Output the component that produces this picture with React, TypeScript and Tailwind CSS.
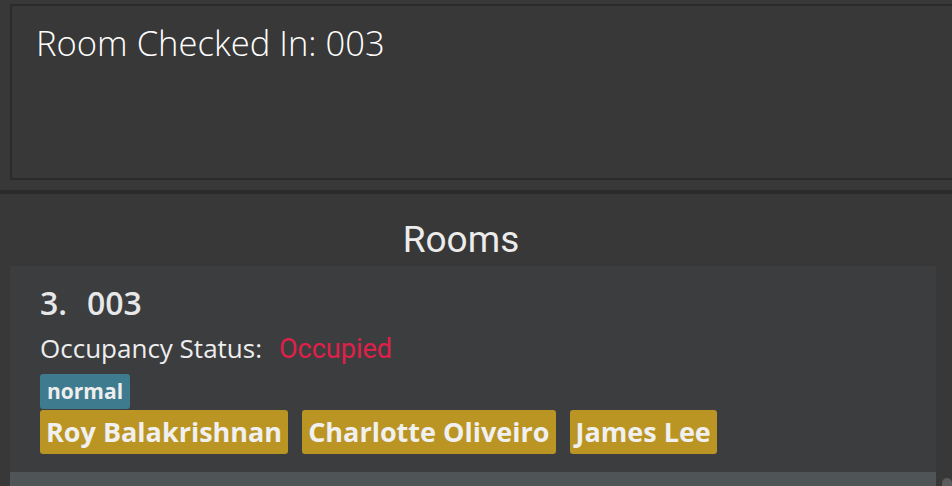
import React from "react";

const open = { fontFamily: '"Open Sans", "Noto Sans", sans-serif' };

function Tag({ children, className }: { children: React.ReactNode; className: string }) {
  return <span className={className}>{children}</span>;
}

export default function App() {
  const names = ["Roy Balakrishnan", "Charlotte Oliveiro", "James Lee"];
  return (
    <div className="w-[952px] h-[486px] bg-[#383838] overflow-hidden flex flex-col">
      {/* Result display */}
      <div className="h-[190px] pt-[4px] pl-[10px] shrink-0">
        <div className="h-[176px] border-2 border-r-0 border-[#2b2b2b] bg-[#383838] pt-[19px] pl-[24px]">
          <div
            className="text-[34.6px] leading-[35px] font-light text-white"
            style={open}
          >
            Room Checked In: 003
          </div>
        </div>
      </div>
      <div className="h-[4px] bg-[#2b2b2b] shrink-0" />

      {/* Rooms panel */}
      <div className="flex-1 flex flex-col">
        <div
          className="w-[922px] text-center mt-[27px] mb-[8px] text-[37px] leading-[37px] text-[#ececec]"
          style={{ fontFamily: 'Roboto, "Liberation Sans", sans-serif' }}
        >
          Rooms
        </div>
        <div className="flex flex-1">
          <div className="ml-[10px] w-[926px] flex flex-col">
            <div className="bg-[#3c3d3f] h-[206px] pt-[21px] pl-[30px]" style={open}>
              <div className="flex text-[32px] leading-[32px] font-semibold text-[#e8e8e8]">
                <span className="w-[47px]">3.</span>
                <span>003</span>
              </div>
              <div className="flex items-baseline mt-[16px] text-[26px] leading-[26px]">
                <span className="text-[#eeeeee] w-[239px]">Occupancy Status:</span>
                <span
                  className="text-[#e21f4a] text-[27px]"
                  style={{ fontFamily: 'Roboto, "Liberation Sans", sans-serif' }}
                >
                  Occupied
                </span>
              </div>
              <div className="flex mt-[12px]">
                <Tag className="h-[35px] leading-[35px] px-[7px] rounded-[3px] bg-[#3e7b8e] text-[#eeeeee] text-[21px] font-bold">
                  normal
                </Tag>
              </div>
              <div className="flex gap-[14px] mt-[1px]">
                {names.map((n) => (
                  <Tag
                    key={n}
                    className="h-[44px] leading-[44px] px-[6px] rounded-[3px] bg-[#bb9523] text-[#f0f0f0] text-[27px] font-bold"
                  >
                    {n}
                  </Tag>
                ))}
              </div>
            </div>
            <div className="flex-1 bg-[#4f5457]" />
          </div>
          <div className="w-[16px] flex flex-col justify-end items-end">
            <div className="w-[10px] h-[8px] rounded-t-full bg-[#5b5b5b]" />
          </div>
        </div>
      </div>
    </div>
  );
}
